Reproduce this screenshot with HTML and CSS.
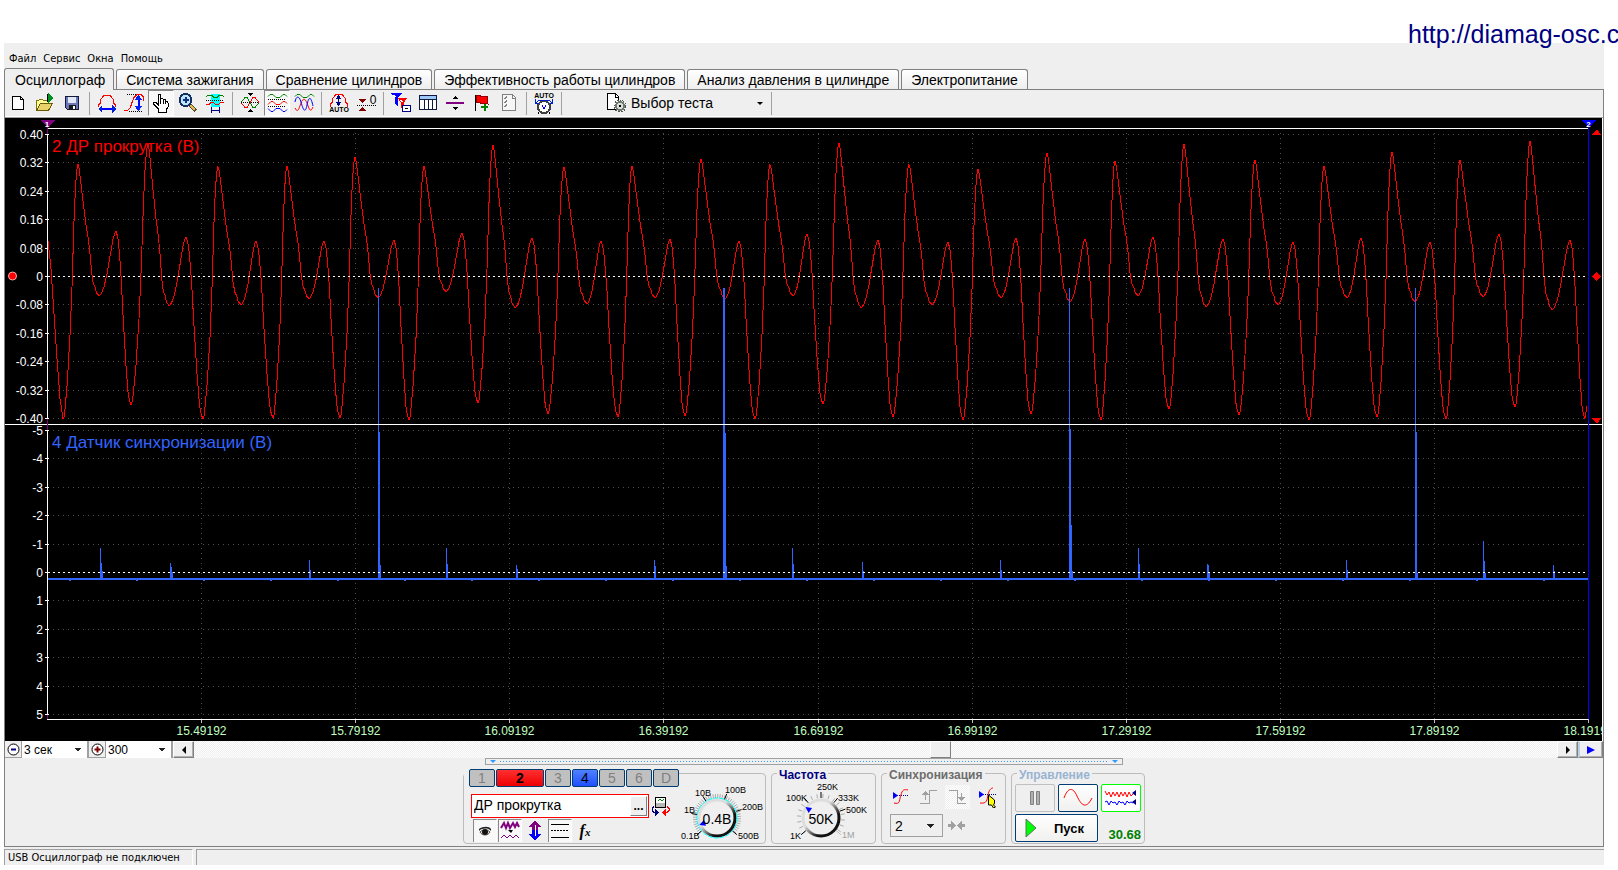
FILE: index.html
```html
<!DOCTYPE html>
<html lang="ru">
<head>
<meta charset="utf-8">
<title>USB Осциллограф</title>
<link rel="stylesheet" href="styles.css">
</head>
<body>
<header class="site"><a class="site-link" href="http://diamag-osc.com">http://diamag-osc.com</a></header>
<div class="app">
  <nav class="menu">
    <button>Файл</button><button>Сервис</button><button>Окна</button><button>Помощь</button>
  </nav>
  <div class="tabs" role="tablist">
    <button class="tab active" role="tab" aria-selected="true">Осциллограф</button>
    <button class="tab" role="tab">Система зажигания</button>
    <button class="tab" role="tab">Сравнение цилиндров</button>
    <button class="tab" role="tab">Эффективность работы цилиндров</button>
    <button class="tab" role="tab">Анализ давления в цилиндре</button>
    <button class="tab" role="tab">Электропитание</button>
  </div>
  <main class="page">
    <div class="toolbar">
      <button class="tool" aria-label="Новый"><svg class="ico" viewBox="0 0 22 22"><path d="M5.500 4.500h8l3 3v10h-11z" fill="#fff" stroke="#000"/><path d="M13.500 4.500v3h3" fill="none" stroke="#000"/></svg></button>
      <button class="tool" aria-label="Открыть"><svg class="ico" viewBox="0 0 22 22"><path d="M2.500 18V8.500h2l1-1h3l1 1h5v3" fill="#ffff9c" stroke="#84710a"/><path d="M2.500 18.500l4-7h12l-4 7z" fill="#e9d36b" stroke="#6b5b00"/><path d="M13.500 10V2" stroke="#000"/><path d="M14 1l6 5-6 5z" fill="#008f20"/></svg></button>
      <button class="tool" aria-label="Сохранить"><svg class="ico" viewBox="0 0 22 22"><path d="M4.500 4.500h13v13h-11l-2-2z" fill="#6a78b8" stroke="#14183c"/><path d="M7 5h8v6H7z" fill="#dfe8f4"/><path d="M8 13h7v5H8z" fill="#16181f"/><path d="M12 14h2v3h-2z" fill="#fff"/></svg></button>
      <span class="sep"></span>
      <button class="tool" aria-label="Масштаб по времени"><svg class="ico" viewBox="0 0 22 22"><path d="M2.500 15v-2l2-2V8l2-3 2-2h5l2 2 2 3v3l2 2v2" fill="none" stroke="red"/><path d="M5 17h12" stroke="#00f" stroke-width="2"/><path d="M2 17l4-4v8zM20 17l-4-4v8z" fill="#0020d8"/></svg></button>
      <button class="tool" aria-label="Масштаб по уровню"><svg class="ico" viewBox="0 0 22 22"><path d="M4 2.500h12M6 19.500h14" stroke="#000" stroke-dasharray="1 1"/><path d="M1 18.500h3l3-2 2-6 2-5 3-3h4l2 2v4" fill="none" stroke="red"/><path d="M15.500 7v9" stroke="#00f" stroke-width="2"/><path d="M15.500 3l4 5h-8zM15.500 19l4-5h-8z" fill="#0020f0"/></svg></button>
      <button class="tool on" aria-label="Рука"><svg class="ico" viewBox="0 0 22 22"><path d="M8.500 20v-3l-5-5c0-2 2-2 3-1l2 2V4c0-2 2-2 2 0v5-2c1-1 2-1 2.500 0v2-1c1-1 2-1 2.500 0v2c1-1 2.500-1 2.500 1v4l-2 3v2z" fill="#fff" stroke="#000"/><path d="M10.500 8v4M13 9v3M15.500 10v2" stroke="#000"/></svg></button>
      <button class="tool" aria-label="Лупа"><svg class="ico" viewBox="0 0 22 22"><path d="M12 12l7 7" stroke="#5a4a28" stroke-width="4"/><path d="M12 12l6 6" stroke="#e0b850" stroke-width="2"/><circle cx="8.500" cy="8" r="6" fill="#bfe4ff" stroke="#153060" stroke-width="2"/><path d="M8.500 5v6M5.500 8h6" stroke="#103080" stroke-width="2"/></svg></button>
      <button class="tool" aria-label="Выделить"><svg class="ico" viewBox="0 0 22 22"><path d="M7 2h9v13H7z" fill="#0ff"/><path d="M2 4.500l2-1h4l2 2h3l2-2h3l2 1" fill="none" stroke="#008000"/><path d="M2 8.500h18" stroke="#000" stroke-dasharray="1 1"/><path d="M2 12.500h3l2-2h2l3 2h2l3-2h3" fill="none" stroke="red"/><path d="M7.500 15v6M15.500 15v6M8 18h7" stroke="#000080"/></svg></button>
      <span class="sep"></span>
      <button class="tool" aria-label="Центрировать"><svg class="ico" viewBox="0 0 22 22"><path d="M2 10.500l4-5h2l6 10h2l4-5" fill="none" stroke="#008000"/><path d="M2 10.500l4 5h2l6-10h2l4 5" fill="none" stroke="red"/><path d="M2 10.500h18" stroke="#000" stroke-dasharray="1 1"/><path d="M8 1h6l-3 3zM8 20h6l-3-3z" fill="#000"/></svg></button>
      <button class="tool on" aria-label="Раздельно"><svg class="ico soft" viewBox="0 0 22 22"><g fill="none"><path d="M2 4.500l2-2h3l3 3h4l3-3h2l2 2" stroke="#008000"/><path d="M2 12.500l3-3h2l3 3h4l3-3h2l2 2" stroke="red"/><path d="M2 16.500l3 3h2l3-3h4l3 3h2l2-2" stroke="#00f"/><path d="M2 7.500h18M2 14.500h18" stroke="#000" stroke-dasharray="1 1"/></g></svg></button>
      <button class="tool" aria-label="Совместно"><svg class="ico soft" viewBox="0 0 22 22"><g fill="none"><path d="M2 4.500l2-2h3l3 3h4l3-3h2l2 2" stroke="#008000"/><path d="M2 16c3 6 4 0 6-5s4-5 6 0 3 11 6 4" stroke="red"/><path d="M2 10c1-6 4-7 6 0s4 13 6 3 4-8 6 1" stroke="#00f"/></g></svg></button>
      <span class="sep"></span>
      <button class="tool" aria-label="Автомасштаб"><svg class="ico" viewBox="0 0 22 22"><path d="M2.500 15v-3l2-2V7l2-3 2-2h5l2 2 2 3v3l2 2v3" fill="none" stroke="red"/><path d="M10.500 5v8" stroke="#000060"/><path d="M10.500 3l3 4h-6zM10.500 14l3-4h-6z" fill="#000080"/><text x="11" y="20" class="auto">AUTO</text></svg></button>
      <button class="tool" aria-label="Обнулить"><svg class="ico" viewBox="0 0 22 22"><path d="M2 13.500h19" stroke="#000" stroke-dasharray="1 1"/><path d="M3 7h8l-4 4zM3 19h8l-4-4z" fill="#800000"/><text x="18" y="12" class="zero">0</text></svg></button>
      <span class="sep"></span>
      <button class="tool" aria-label="Фильтр"><svg class="ico" viewBox="0 0 22 22"><path d="M1 1h11L8 6v9L5 12V6z" fill="#00f"/><path d="M8 6h9l-3 5v8l-3-3v-5z" fill="red"/><path d="M3 3l3 2M10 8l3 2" stroke="#fff"/><path d="M12.500 13.500h8v6h-8z" fill="#fff" stroke="#000080"/><path d="M15 17l1-1 1 1 1-1" fill="none" stroke="#000"/></svg></button>
      <button class="tool" aria-label="Таблица"><svg class="ico" viewBox="0 0 22 22"><path d="M2.500 3.500h17v14h-17z" fill="#fff" stroke="#101840"/><path d="M3 4h16v3H3z" fill="#9cc8f8"/><path d="M2 7.500h18M7.500 8v10M11.500 8v10M15.500 8v10" stroke="#101840"/></svg></button>
      <button class="tool" aria-label="Разделить"><svg class="ico" viewBox="0 0 22 22"><path d="M2 11h18" stroke="#800080" stroke-width="2"/><path d="M8 7l3-3 3 3zM8 15h6l-3 3z" fill="#000"/></svg></button>
      <button class="tool" aria-label="Метка"><svg class="ico" viewBox="0 0 22 22"><path d="M5 4l3-1 3 2 3-1 3 1-1 3 1 4-3-1-3 1-3-2-3 1z" fill="red" stroke="#900000"/><path d="M4.500 3v16" stroke="#000"/><path d="M10 15h7M13.500 12v7" stroke="#008000" stroke-width="2"/></svg></button>
      <button class="tool" aria-label="Список"><svg class="ico" viewBox="0 0 22 22"><path d="M4.500 2.500h10l3 3v13h-13z" fill="#f6f6f6" stroke="#808080"/><path d="M14.500 3v3h3M6 6l1 1 2-3M6 10l1 1 2-3M6 14l1 1 2-3" fill="none" stroke="#808080"/></svg></button>
      <span class="sep"></span>
      <button class="tool" aria-label="Авто напряжение"><svg class="ico tall" viewBox="0 0 22 24"><text x="11" y="7" class="auto">AUTO</text><circle cx="11" cy="16" r="6" fill="#fff" stroke="#404040" stroke-width="2"/><path d="M9 14l2 4 2-4" fill="none" stroke="#00f"/><path d="M3 11.500l3-2h10l3 2M2.500 8v4h3M19.500 8v4h-3" fill="none" stroke="#0020d8"/><path d="M6 21l-1 2M16 21l1 2" stroke="#000"/></svg></button>
      <span class="sep"></span>
      <button class="test"><svg class="ico" viewBox="0 0 22 22"><path d="M2.500 1.500h8l3 3v13h-11z" fill="#fff" stroke="#000"/><path d="M10.500 2v3h3" fill="none" stroke="#000"/><circle cx="15" cy="14" r="4" fill="#d8ded8" stroke="#707870" stroke-width="2"/><circle cx="15" cy="14" r="6" fill="none" stroke="#505850" stroke-dasharray="2 1"/><circle cx="15" cy="14" r="1" fill="#000"/></svg><span>Выбор теста</span><i class="down"></i></button>
      <span class="sep"></span>
    </div>

    <svg class="chart" id="chart" role="img" aria-label="Осциллограмма"></svg>

    <div class="scroll">
      <button class="mini" aria-label="Уменьшить"><svg class="dot" viewBox="0 0 15 15"><circle cx="7.500" cy="7.500" r="5.500" fill="#fff" stroke="#000"/><path d="M5 7.500h5" stroke="#000080" stroke-width="2"/></svg></button>
      <select class="range" aria-label="Развёртка"><option>3 сек</option></select>
      <button class="mini" aria-label="Увеличить"><svg class="dot" viewBox="0 0 15 15"><circle cx="7.500" cy="7.500" r="5.500" fill="#fff" stroke="#000"/><path d="M4.500 7.500h6M7.500 4.500v6" stroke="#800000" stroke-width="2"/></svg></button>
      <select class="range" aria-label="Масштаб"><option>300</option></select>
      <button class="arrow" aria-label="Влево"><i class="left"></i></button>
      <div class="track"><span class="before"></span><span class="thumb"></span></div>
      <button class="arrow" aria-label="Вправо"><i class="right"></i></button>
      <button class="arrow play" aria-label="Воспроизвести"><i class="right blue"></i></button>
    </div>
    <div class="splitter"><i></i><span></span><i></i></div>

    <div class="controls">
      <section class="group channels">
        <div class="chan">
          <div class="nums"><button>1</button><button class="red">2</button><button>3</button><button class="blu">4</button><button>5</button><button>6</button><button>D</button></div>
          <div class="name">
            <div class="field"><input type="text" aria-label="Имя канала" value="ДР прокрутка"><button aria-label="Выбрать">...</button></div>
            <svg class="ico" viewBox="0 0 22 22"><path d="M5.500 2.500h10v10h-10z" fill="#fff" stroke="#000"/><path d="M6 8h9v4H6z" fill="#b8b8b8"/><path d="M8 6l2-2 2 2 2-2" stroke="#008000" fill="none"/><path d="M4 11.500l-2 2v2l2 2h3" fill="none" stroke="#000080"/><path d="M5 14l4 3.500L5 21z" fill="#000080"/><path d="M17 11.500l2 2v2l-2 2h-3" fill="none" stroke="red"/><path d="M16 14l-4 3.500 4 3.500z" fill="red"/></svg>
          </div>
          <div class="opts">
            <button class="on" aria-label="Видимость"><svg class="ico soft" viewBox="0 0 22 22"><path d="M5 9c4-3 10-3 12 0v2l-1-1c-3-2-8-2-11 1z" fill="#222"/><path d="M6 12c3-3 7-3 10 0-2 4-8 4-10 0z" fill="#f4d8c0" stroke="#555"/><circle cx="11" cy="12" r="3" fill="#111"/></svg></button>
            <button class="on" aria-label="Сглаживание"><svg class="ico soft" viewBox="0 0 22 22"><path d="M2 8l3-5 2 5 2-5 2 5 3-5 2 4 2-4 2 4" fill="none" stroke="#800080" stroke-width="2"/><path d="M9 10h5l-2 3z" fill="#000"/><path d="M2 18l3-3 3 3 3-3 3 3 3-3 3 3" fill="none" stroke="#800080"/></svg></button>
            <button aria-label="Инверсия"><svg class="ico" viewBox="0 0 22 22"><path d="M11 1l7 6h-4v4H8V7H4z" fill="#800080"/><path d="M11 20l7-6h-4v-4H8v4H4z" fill="#00f"/><path d="M11 5v11" stroke="#fff"/></svg></button>
            <button class="on" aria-label="Линии"><svg class="ico" viewBox="0 0 22 22"><path d="M2 4.500h18M2 17.500h18" stroke="#000"/><path d="M2 10.500h18" stroke="#000" stroke-dasharray="2 1"/></svg></button>
            <button class="fx">f<small>x</small></button>
          </div>
        </div>
        <svg class="knob one" viewBox="0 0 96 70" id="knob1"></svg>
      </section>
      <section class="group freq">
        <h2>Частота</h2>
        <svg class="knob two" viewBox="0 0 96 70" id="knob2"></svg>
      </section>
      <section class="group sync">
        <h2>Синхронизация</h2>
        <div class="row">
          <button class="flat" aria-label="Уровень"><svg class="ico soft" viewBox="0 0 22 22"><path d="M4 9.500h16" stroke="#000080" stroke-dasharray="1 1"/><path d="M5 17c7 2 5-4 7-8 1-5 3-6 7-5" fill="none" stroke="red"/><path d="M4 6l5 3.500L4 13z" fill="#00f"/></svg></button>
          <button class="flat" aria-label="Фронт"><svg class="ico" viewBox="0 0 22 22"><path d="M2 17.500h9.500v-13H19M7.500 14V8" fill="none" stroke="#a0a0a0"/><path d="M4 9h7L7.500 5z" fill="#a0a0a0"/></svg></button>
          <button class="flat dither" aria-label="Спад"><svg class="ico" viewBox="0 0 22 22"><path d="M2 4.500h8.500v13H19M14.500 7v6" fill="none" stroke="#a0a0a0"/><path d="M11 11h7l-3.500 4z" fill="#a0a0a0"/></svg></button>
          <button class="flat" aria-label="Захват"><svg class="ico soft" viewBox="0 0 22 22"><path d="M3 8.500h17" stroke="#000080" stroke-dasharray="1 1"/><path d="M4 17c7 1 7-3 8-8 1-5 3-7 5-7" fill="none" stroke="red"/><path d="M3 5l5 3.500L3 12z" fill="#00f"/><path d="M12.500 9l6 5v3l-1 2 2 2-2 1-2-3-3 0z" fill="#ff0" stroke="#000"/></svg></button>
        </div>
        <div class="row">
          <select class="source" aria-label="Канал синхронизации"><option>2</option></select>
          <svg class="ico" viewBox="0 0 22 22"><path d="M3 9h3V6l5 4.500L6 15v-3H3zM20 9h-3V6l-5 4.500 5 4.500v-3h3z" fill="#a0a0a0"/></svg>
        </div>
      </section>
      <section class="group run">
        <h2>Управление</h2>
        <div class="grid">
          <button class="xp off" aria-label="Пауза"><svg class="wide" viewBox="0 0 34 22"><path d="M12.500 4.500h3v13h-3zM18.500 4.500h3v13h-3z" fill="#b0b0b0" stroke="#808080"/></svg></button>
          <button class="xp" aria-label="Однократно"><svg class="wide soft" viewBox="0 0 34 22"><path d="M3 11C7 0 12 0 16 9s9 14 15 2" fill="none" stroke="red"/></svg></button>
          <button class="xp green" aria-label="Непрерывно"><svg class="wide soft" viewBox="0 0 34 22"><path d="M1 4l2 4 2-3 2 5 2-5 2 4 2-4 2 5 2-5 2 4 2-4 2 5 2-5 2 4 2-2" fill="none" stroke="red"/><path d="M1 15l2-1 2 4 2-4 2 2 2-1 2 3 2-4 2 2 2-1 2 3 2-4 2 2 2-1 2 1" fill="none" stroke="#00f"/><path d="M32 3v6l-4-3zM32 12v6l-4-3z" fill="#000080"/></svg></button>
          <button class="xp start"><svg class="tri" viewBox="0 0 12 20"><path d="M1 1l10 9-10 9z" fill="#0f0" stroke="#607060"/></svg><span>Пуск</span></button>
          <output class="rate">30.68</output>
        </div>
      </section>
    </div>
  </main>
  <footer class="status"><span>USB Осциллограф не подключен</span><span></span></footer>
</div>
<script src="script.js"></script>
</body>
</html>
```
FILE: styles.css
```css
* { box-sizing: border-box; }
body { margin: 0; background: #fff; color: #000; font: 12px "Liberation Sans", Arial, sans-serif; overflow-x: hidden; }
button, input, select { font: inherit; color: inherit; margin: 0; padding: 0; border: 0; background: none; }
h2 { margin: 0; }

.site { height: 43px; display: flex; justify-content: flex-end; }
.site-link { width: 210px; padding-top: 20px; font-size: 25px; line-height: 29px; color: #000080; text-decoration: none; white-space: nowrap; position: relative; z-index: 1; }

.app { margin: 0 14px 5px 4px; background: #efefef; }
.menu { height: 25px; display: flex; align-items: center; gap: 7px; padding: 6px 5px 0; font: 11px "DejaVu Sans Condensed", "DejaVu Sans", sans-serif; }
.tabs { height: 21px; display: flex; align-items: flex-end; gap: 2px; font-size: 14px; }
.tab { height: 20px; padding: 0 9px; border: 1px solid #808080; border-bottom: 0; border-radius: 3px 3px 0 0; background: linear-gradient(#fff, #eee); white-space: nowrap; line-height: 18px; }
.tab.active { height: 22px; margin-bottom: -1px; padding: 0 8px 0 10px; background: #efefef; position: relative; z-index: 1; }
.page { border: 1px solid #808080; }

.toolbar { height: 28px; display: flex; align-items: flex-start; gap: 1px; border-bottom: 1px solid #a0a0a0; box-shadow: inset 0 -1px #fff; }
.tool { width: 26px; height: 26px; display: grid; place-items: center; border: 1px solid transparent; }
.tool.on, .opts .on { border-color: #888 #fff #fff #888; background: #f8f8f8; }
.ico { width: 22px; height: 22px; display: block; flex: none; shape-rendering: crispEdges; }
.ico.tall { height: 24px; }
.ico.soft { shape-rendering: auto; }
.auto { font: bold 7px "Liberation Sans", sans-serif; text-anchor: middle; }
.zero { font: 12px "Liberation Sans", sans-serif; text-anchor: middle; }
.sep { width: 1px; height: 23px; margin: 2px 3px 0; background: #a0a0a0; }
.test { width: 162px; height: 26px; margin-left: 39px; display: flex; align-items: center; gap: 4px; font-size: 14px; }
.test span { flex: 1; text-align: left; }
.down { border: 3px solid transparent; border-top-color: #000; border-bottom: 0; margin-right: 4px; }

.chart { display: block; width: 100%; height: 623px; background: #000; border-right: 1px solid #fff; }
.chart text { font: 12px "Liberation Sans", sans-serif; fill: #fff; }
.chart .time { fill: #c0ffc0; text-anchor: middle; }
.chart .level { text-anchor: end; }
.chart .title { font-size: 17px; }
.chart .t1 { fill: #f00; }
.chart .t2 { fill: #3264ff; }
.chart .flag { font-size: 8px; font-weight: bold; text-anchor: middle; }

.scroll { height: 17px; display: flex; }
.mini { width: 17px; display: grid; place-items: center; border-right: 1px solid #a0a0a0; border-bottom: 1px solid #a0a0a0; }
.dot { width: 15px; height: 15px; }
.range, .source {
  appearance: none;
  background-image: linear-gradient(to bottom right, #222 50%, transparent 50%), linear-gradient(to bottom left, #222 50%, transparent 50%);
  background-size: 4px 4px;
  background-repeat: no-repeat;
}
.range { width: 67px; padding-left: 2px; border-right: 2px solid #a0a0a0; background-color: #fff; background-position: right 5px top 7px, right 9px top 7px; }
.arrow { width: 21px; display: grid; place-items: center; background: #efefef; border: 1px solid; border-color: #fff #808080 #808080 #fff; box-shadow: inset -1px -1px #b0b0b0; }
.play { width: 25px; border-left: 2px solid #b8d0e8; }
.left { border: 4px solid transparent; border-right-color: #000; border-left: 0; }
.right { border: 4px solid transparent; border-left-color: #000; border-right: 0; }
.right.blue { border-left: 8px solid #00f; }
.track, .dither { background: repeating-conic-gradient(#fff 0 25%, #efefef 0 50%) 0 0 / 2px 2px; }
.track { flex: 1; display: flex; }
.before { width: 54%; }
.thumb { width: 21px; background: #efefef; border: 1px solid; border-color: #fff #808080 #808080 #fff; }

.splitter { width: 638px; height: 7px; margin: 0 auto 0 480px; display: flex; align-items: center; gap: 4px; padding: 0 4px; border: 1px solid #a0a0a0; }
.splitter i { border: 3px solid transparent; border-top-color: #39f; border-bottom: 0; }
.splitter span { flex: 1; height: 1px; background: repeating-linear-gradient(90deg, #39f 0 1px, transparent 1px 3px); }

.controls { height: 81px; display: flex; gap: 5px; padding: 8px 0 2px 458px; }
.group { border: 1px solid #bcbcbc; border-radius: 4px; }
.group h2 { width: max-content; height: 14px; margin: -6px 0 0 5px; padding: 0 2px; background: #efefef; font-size: 12px; line-height: 14px; }
.channels { width: 303px; display: flex; }
.freq { width: 105px; }
.freq h2 { color: #000080; }
.sync { width: 125px; }
.sync h2 { color: #6d6d6d; }
.run { width: 134px; }
.run h2 { color: #99b4d1; }

.chan { width: 207px; margin-top: -5px; }
.nums { width: 215px; display: flex; gap: 1px; padding-left: 5px; background: #efefef; }
.nums button { width: 26px; height: 18px; border: 1px solid #003c74; border-radius: 2px; background: #c0c0c0; color: #808080; font-size: 14px; line-height: 16px; }
.nums .red { width: 48px; background: linear-gradient(#ff3030, #e00); color: #000; font-weight: bold; }
.nums .blu { background: linear-gradient(#5080ff, #2050ff); color: #000; }
.name { display: flex; align-items: center; gap: 1px; margin: 7px 0 0 7px; }
.field { width: 178px; height: 24px; display: flex; padding: 1px; border: 1px solid #f00; background: #fff; }
.field input { flex: 1; min-width: 0; font-size: 14px; padding: 0 0 2px 1px; }
.field button { width: 17px; border: 1px solid; border-color: #fff #808080 #808080 #fff; background: #efefef; font-weight: bold; line-height: 10px; }
.opts { display: flex; gap: 1px; margin: 1px 0 0 9px; }
.opts button { width: 24px; height: 23px; display: grid; place-items: center; border: 1px solid transparent; }
.opts .on { border-bottom: 0; }
.opts .fx { display: block; font: italic bold 16px "Liberation Serif", serif; }
.fx small { font-size: 11px; }
.knob { width: 96px; height: 70px; display: block; flex: none; }
.knob text { font: 9px "Liberation Sans", sans-serif; }
.knob .val { font-size: 14px; text-anchor: middle; }
.knob.two { margin: -9px 0 0 3px; }
.knob .dim { fill: #a0a0a0; }

.row { display: flex; align-items: center; gap: 2px; padding-left: 3px; }
.flat { width: 25px; height: 24px; margin: 3px 0 0 2px; display: grid; place-items: center; }
.row + .row { padding: 5px 0 0 8px; }
.source { width: 53px; height: 23px; border: 1px solid #a0a0a0; padding-left: 4px; font-size: 14px; background-position: right 7px top 9px, right 11px top 9px; }
.grid { display: grid; grid-template-columns: 40px 40px 40px; gap: 2px 3px; margin: 2px 0 0 3px; }
.xp { height: 28px; display: grid; place-items: center; border: 1px solid #003c74; border-radius: 2px; background: linear-gradient(#fff, #f0f0ee); }
.off { border-color: #c0c0c0; background: #efefef; }
.green { border-color: #0f0; background: #fff; }
.wide { width: 34px; height: 22px; }
.start { grid-column: span 2; display: flex; align-items: center; gap: 17px; padding-left: 9px; font-size: 13px; font-weight: bold; }
.tri { width: 12px; height: 20px; }
.rate { color: #008000; font-size: 13px; font-weight: bold; align-self: end; justify-self: end; }

.status { height: 18px; display: flex; gap: 3px; padding-top: 2px; font: 11px "DejaVu Sans Condensed", "DejaVu Sans", sans-serif; line-height: 16px; white-space: nowrap; }
.status span { border-top: 1px solid #a0a0a0; border-left: 1px solid #a0a0a0; padding-left: 3px; flex: 1; }
.status span:first-child { flex: 0 0 189px; border-right: 1px solid #fff; }
```
FILE: script.js
```js
// Key points of the crank trace: peak, small trough, small peak, deep trough.
const cycles = [
  [73,46,94,177,111,113,126,286],[143,26,164,187,181,119,198,300],[213,48,236,186,251,123,268,299],
  [282,48,304,180,319,123,335,299],[350,39,373,179,389,122,404,301],[419,48,441,173,457,115,473,284],
  [488,27,510,189,527,120,543,295],[559,49,582,185,596,123,613,298],[627,48,650,179,665,121,680,297],
  [696,41,720,180,734,123,750,300],[765,46,788,177,802,116,818,285],[834,25,856,189,873,122,888,298],
  [904,46,927,186,943,124,958,301],[973,51,996,179,1011,120,1026,295],[1042,35,1065,183,1080,121,1096,301],
  [1110,43,1133,177,1148,119,1164,290],[1179,26,1201,188,1218,121,1234,296],[1250,42,1273,186,1288,124,1304,301],
  [1319,48,1342,179,1356,120,1372,298],[1387,34,1410,183,1425,124,1441,300],[1455,42,1478,178,1494,116,1510,288],
  [1525,23,1547,191,1565,122,1580,300]
];
// Shape of each leg as pairs: share of the time, share of the level.
const legs = [
  [.05,.03,.1,.09,.24,.28,.38,.46,.5,.58,.57,.68,.65,.83,.73,.91,.82,.94,.88,.98,1,1],
  [.08,.01,.18,.06,.3,.14,.47,.34,.65,.61,.82,.87,.92,.97,1,1],
  [.08,.02,.15,.05,.26,.16,.35,.28,.45,.46,.65,.76,.8,.93,.9,.98,1,1],
  [.07,.01,.13,.04,.28,.14,.47,.33,.6,.52,.74,.79,.83,.91,.92,.98,1,1]
];
// Sync pulses: x and the tops of neighbouring columns.
const pulses = [
  [95,430,445,453],[165,445,449,454],[304,442,452],[373,170,314,447],[441,430,446],[511,447,451],
  [649,442,448],[718,170,170,315,448],[787,430,446],[857,444,453],[995,442,452],[1064,170,311,407,453],
  [1133,430,446],[1202,446,447,454],[1341,442,452],[1410,170,314,455],[1478,423,443,455],[1548,447,453]
];
const chart = document.getElementById('chart');
const L = 42, SPAN = 1541;

function trace(px) {
  const pts = [[43,122],[46,150],[48,180],[52,240],[55,280],[58,300]];
  const run = (a, b, leg) => {
    for (let i = 0; i < leg.length; i += 2) pts.push([a[0] + (b[0] - a[0]) * leg[i], a[1] + (b[1] - a[1]) * leg[i + 1]]);
  };
  let prev = [58, 301];
  for (const c of cycles) {
    const k = [[c[0], c[1]], [c[2], c[3]], [c[4], c[5]], [c[6], c[7]]];
    run(prev, k[0], legs[3]);
    run(k[0], k[1], legs[0]);
    run(k[1], k[2], legs[1]);
    run(k[2], k[3], legs[2]);
    prev = k[3];
  }
  pts.push([1582, 288]);
  return pts.map(p => px(p[0]).toFixed(1) + ',' + (p[1] + .5).toFixed(1)).join(' ');
}

function draw() {
  const w = chart.clientWidth || 1596;
  const R = w - 14;
  const px = x => L + (x - L) * (R - L) / SPAN;
  const col = x => Math.round(px(x)) + .5;
  let s = '<g shape-rendering="crispEdges">';
  const line = (x1, y1, x2, y2, c, d) => {
    s += `<line x1="${x1}" y1="${y1}" x2="${x2}" y2="${y2}" stroke="${c}"${d ? ` stroke-dasharray="${d}"` : ''}/>`;
  };
  const panels = [[16, ['0.40','0.32','0.24','0.16','0.08','0','-0.08','-0.16','-0.24','-0.32','-0.40']],
                  [312, ['-5','-4','-3','-2','-1','0','1','2','3','4','5']]];
  let text = '';
  for (const [top, names] of panels) {
    names.forEach((n, i) => {
      const y = top + Math.round(i * 28.4) + .5;
      line(L + 6, y, R - 2, y, '#505050', '1 4');
      line(L - 2, y, L + 2, y, '#fff');
      text += `<text class="level" x="${L - 4}" y="${y + 4}">${n}</text>`;
    });
  }
  for (let i = 1; i <= 10; i++) {
    const x = Math.round(L + i * (R - L) / 10) + .5;
    if (i < 10) line(x, 15, x, 601, '#505050', '1 4');
    line(x, 601, x, 605, '#c0c0c0');
    text += `<text class="time" x="${x}" y="617">${(15.19192 + i * .3).toFixed(5)}</text>`;
  }
  text += `<text class="title t1" x="47" y="34">2 ДР прокрутка (В)</text><text class="title t2" x="47" y="330">4 Датчик синхронизации (В)</text>`;
  s += text;
  s += `<polyline points="${trace(px)}" fill="none" stroke="#f00"/>`;
  s += `<rect x="${L + 1}" y="460" width="${R - L - 1}" height="2" fill="#3264ff"/>`;
  for (const [x, ...tops] of pulses) tops.forEach((t, i) => line(col(x) + i, t, col(x) + i, 461, '#3264ff'));
  for (let x = 64; x < 1570; x += 67) line(px(x), 462.5, px(x) + 2, 462.5, '#3264ff');
  line(L, 10.5, R, 10.5, '#fff');
  line(0, 306.5, w, 306.5, '#fff');
  line(L, 601.5, R, 601.5, '#fff');
  line(L + 1, 158.5, R, 158.5, '#fff', '2 3');
  line(L + 1, 454.5, R, 454.5, '#fff', '2 3');
  line(L + .5, 2, L + .5, 601, '#800080');
  line(L + .5, 16, L + .5, 301, '#fff');
  line(L + .5, 312, L + .5, 597, '#fff');
  line(R + .5, 2, R + .5, 601, '#00f');
  s += `<path d="M${L - 7} 2h15l-7 8z" fill="#800080"/><path d="M${R - 7} 2h15l-7 8z" fill="#00f"/>`;
  s += `<path d="M${R + 4} 17h9l-4-6z M${R + 4} 300h9l-4 6z M${R + 4} 158.500l4.500-4.500 4.500 4.500-4.500 4.500z" fill="#f00"/></g>`;
  s += `<circle cx="7.500" cy="158" r="4" fill="#f00" stroke="#faa"/>`;
  s += `<text class="flag" x="${L}" y="9">1</text><text class="flag" x="${R + .5}" y="9">2</text>`;
  chart.innerHTML = s;
}
draw();
addEventListener('resize', draw);

function knob(id, cx, cy, from, to, labels, value, mark, rim) {
  let s = `<defs><linearGradient id="${id}g" x1="0" y1="0" x2="1" y2="1"><stop offset=".4" stop-color="#ddd"/><stop offset=".7" stop-color="#111"/></linearGradient></defs>`;
  const at = (a, r) => [cx + r * Math.cos(a * Math.PI / 180), cy + r * Math.sin(a * Math.PI / 180)];
  const step = rim ? 6 : 15;
  for (let a = from; a <= to; a += step) {
    const [x1, y1] = at(a, 20), [x2, y2] = at(a, 24);
    s += `<line x1="${x1}" y1="${y1}" x2="${x2}" y2="${y2}" stroke="#aaa"/>`;
  }
  for (const [t, x, y, a, dim] of labels) {
    const [x1, y1] = at(a, 20), [x2, y2] = at(a, 26);
    s += `<line x1="${x1}" y1="${y1}" x2="${x2}" y2="${y2}" stroke="${dim ? '#bbb' : '#000'}"/><text x="${x}" y="${y}"${dim ? ' class="dim"' : ''}>${t}</text>`;
  }
  s += `<circle cx="${cx}" cy="${cy}" r="18" fill="#efefef" stroke="url(#${id}g)" stroke-width="3"/>`;
  if (rim) s += `<circle cx="${cx}" cy="${cy}" r="20" fill="none" stroke="#0ff" stroke-dasharray="5 1"/>`;
  const [mx, my] = at(mark, 16);
  s += `<path d="M0-3L3 3H-3z" fill="#00f" transform="translate(${mx} ${my}) rotate(${mark + 90})"/>`;
  s += `<text class="val" x="${cx}" y="${cy + 6}">${value}</text>`;
  document.getElementById(id).innerHTML = s;
}
knob('knob1', 46, 44, 140, 400, [['0.1В',10,65,140],['1В',13,39,190],['10В',24,22,237],['100В',54,19,292],['200В',71,36,341],['500В',67,65,400]], '0.4В', 158, true);
knob('knob2', 46, 45, 140, 400, [['1K',15,66,140],['100K',11,28,230],['250K',42,17,270],['333K',63,28,310],['500K',71,40,340],['1M',67,65,400,1]], '50K', 215, false);
```
